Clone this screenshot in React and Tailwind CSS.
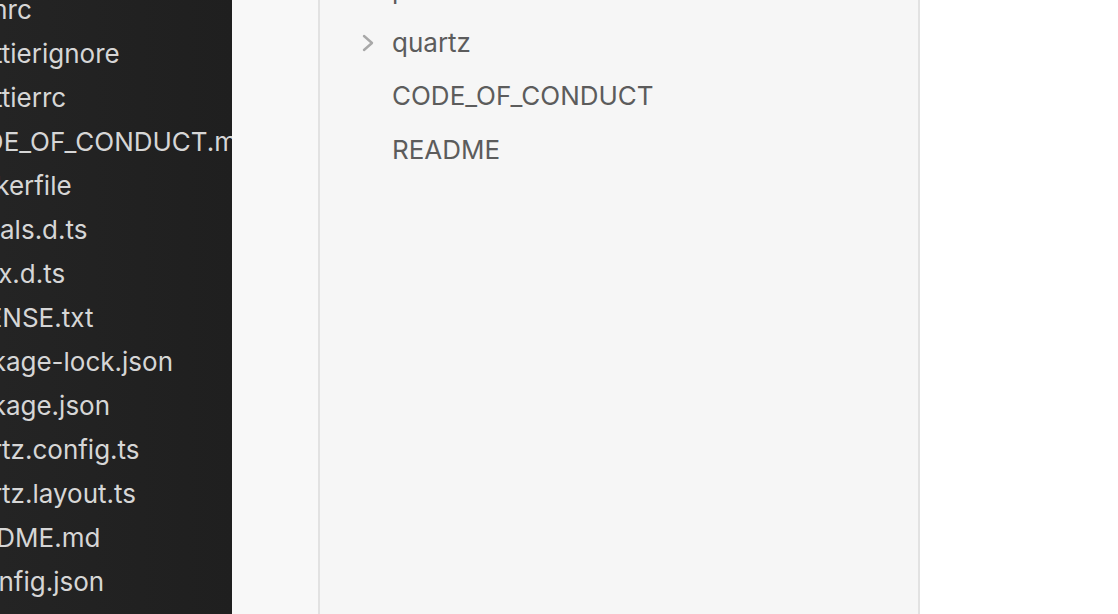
import React from "react";

const files = [
  ".npmrc",
  ".prettierignore",
  ".prettierrc",
  "CODE_OF_CONDUCT.md",
  "Dockerfile",
  "globals.d.ts",
  "index.d.ts",
  "LICENSE.txt",
  "package-lock.json",
  "package.json",
  "quartz.config.ts",
  "quartz.layout.ts",
  "README.md",
  "tsconfig.json",
  "yarn.lock",
];

function Chevron() {
  return (
    <svg width="16" height="20" viewBox="0 0 16 20" fill="none" className="shrink-0">
      <path d="M4 3 L12 10 L4 17" stroke="#a8a8a8" strokeWidth="2.4" strokeLinecap="round" strokeLinejoin="round" />
    </svg>
  );
}

export default function App() {
  const font = { fontFamily: "Inter, 'Noto Sans', sans-serif" };
  return (
    <div className="flex h-[614px] w-[1118px] overflow-hidden" style={font}>
      <div className="w-[232px] shrink-0 overflow-hidden bg-gradient-to-r from-[#242424] to-[#1f1f1f]">
        <div className="-mt-[12px] -ml-[54px] flex flex-col">
          {files.map((f) => (
            <div key={f} className="whitespace-nowrap text-[26px] leading-[44px] text-[#d6d6d6]">
              {f}
            </div>
          ))}
        </div>
      </div>
      <div className="w-[86px] shrink-0 bg-[#f8f8f8]" />
      <div className="w-[602px] shrink-0 border-x-2 border-[#e2e2e2] bg-[#f6f6f6] overflow-hidden">
        <div className="-mt-[37px] flex flex-col">
          <div className="flex h-[53px] items-center pl-[40px]">
            <Chevron />
            <span className="ml-[16px] text-[26px] leading-[53px] text-[#5c5c5c]">public</span>
          </div>
          <div className="flex h-[53px] items-center pl-[40px]">
            <Chevron />
            <span className="ml-[16px] text-[26px] leading-[53px] text-[#5c5c5c]">quartz</span>
          </div>
          <div className="flex h-[54px] items-center pl-[72px]">
            <span className="text-[26px] leading-[54px] text-[#5c5c5c]">CODE_OF_CONDUCT</span>
          </div>
          <div className="flex h-[53px] items-center pl-[72px]">
            <span className="text-[26px] leading-[53px] text-[#5c5c5c]">README</span>
          </div>
        </div>
      </div>
      <div className="flex-1 bg-white" />
    </div>
  );
}
